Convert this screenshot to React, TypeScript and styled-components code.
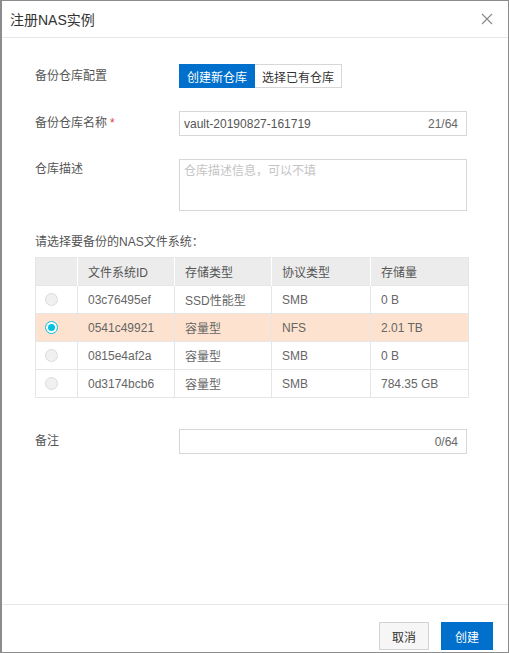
import React from 'react';
import styled, { createGlobalStyle } from 'styled-components';

const GlobalStyle = createGlobalStyle`
  html, body {
    margin: 0;
    padding: 0;
    background: #fff;
  }
  body {
    font-family: "Liberation Sans", "Noto Sans CJK SC", sans-serif;
    font-size: 12px;
    color: #555;
  }
`;

const Dialog = styled.div`
  box-sizing: border-box;
  width: 509px;
  height: 653px;
  display: flex;
  flex-direction: column;
  border: 1px solid #8c8c8c;
  border-left-width: 2px;
  background: #fff;
`;

const Header = styled.div`
  height: 36px;
  flex-shrink: 0;
  display: flex;
  align-items: center;
  justify-content: space-between;
  padding: 0 14px 0 8px;
  border-bottom: 1px solid #e7e7e7;
`;

const Title = styled.div`
  font-size: 14px;
  color: #333;
`;

const Close = styled.button`
  border: 0;
  background: none;
  padding: 0;
  width: 14px;
  height: 14px;
  display: flex;
  cursor: pointer;
`;

const Body = styled.div`
  flex: 1;
  padding: 26px 40px 0 33px;
`;

const Row = styled.div<{ $mb?: number; $mt?: number }>`
  display: flex;
  align-items: flex-start;
  margin-top: ${(p) => p.$mt ?? 0}px;
  margin-bottom: ${(p) => p.$mb ?? 23}px;
`;

const Label = styled.div<{ $lh: number }>`
  width: 144px;
  flex-shrink: 0;
  line-height: ${(p) => p.$lh}px;
  color: #555;
`;

const Star = styled.span`
  color: #e4393c;
  margin-left: 3px;
`;

const Segment = styled.div`
  display: flex;
`;

const SegButton = styled.button<{ $active?: boolean }>`
  height: 24px;
  padding: 0 7px;
  font: inherit;
  font-size: 12px;
  border: 1px solid ${(p) => (p.$active ? '#0070cc' : '#d7d7d7')};
  background: ${(p) => (p.$active ? '#0070cc' : '#fff')};
  color: ${(p) => (p.$active ? '#fff' : '#333')};
  cursor: pointer;
  & + & {
    border-left: 0;
  }
`;

const InputBox = styled.div`
  box-sizing: border-box;
  width: 288px;
  height: 25px;
  border: 1px solid #d7d7d7;
  display: flex;
  align-items: center;
  justify-content: space-between;
  padding: 0 8px 0 4px;
`;

const InputText = styled.span`
  color: #555;
`;

const Counter = styled.span`
  color: #666;
  margin-left: auto;
`;

const TextArea = styled.div`
  box-sizing: border-box;
  width: 288px;
  height: 52px;
  border: 1px solid #d7d7d7;
  padding: 2px 4px;
  color: #c4c4c4;
  line-height: 18px;
`;

const SectionTitle = styled.div`
  margin-top: 22px;
  line-height: 18px;
  color: #555;
`;

const Table = styled.table`
  margin-top: 6px;
  width: 434px;
  border-collapse: collapse;
  table-layout: fixed;
  border: 1px solid #e6e6e6;
`;

const Th = styled.th<{ $w?: number }>`
  box-sizing: border-box;
  width: ${(p) => (p.$w ? `${p.$w}px` : 'auto')};
  height: 28px;
  padding: 0 10px;
  background: #ececec;
  text-align: left;
  font-weight: normal;
  color: #555;
  border-left: 1px solid #fff;
  white-space: nowrap;
  &:first-child {
    border-left: 0;
  }
`;

const Tr = styled.tr<{ $selected?: boolean }>`
  background: ${(p) => (p.$selected ? '#fde3cf' : '#fff')};
`;

const Td = styled.td`
  box-sizing: border-box;
  height: 28px;
  padding: 0 10px;
  color: #666;
  border-top: 1px solid #e6e6e6;
  border-left: 1px solid #e6e6e6;
  white-space: nowrap;
  &:first-child {
    border-left: 0;
    padding: 0 0 0 9px;
  }
`;

const Radio = styled.span<{ $checked?: boolean }>`
  box-sizing: border-box;
  display: block;
  width: 13px;
  height: 13px;
  border-radius: 50%;
  border: 1px solid ${(p) => (p.$checked ? '#00c1de' : '#dcdcdc')};
  background: ${(p) => (p.$checked ? '#fff' : '#f0f0f0')};
  position: relative;
  &::after {
    content: '';
    display: ${(p) => (p.$checked ? 'block' : 'none')};
    position: absolute;
    left: 2px;
    top: 2px;
    width: 7px;
    height: 7px;
    border-radius: 50%;
    background: #00c1de;
  }
`;

const Footer = styled.div`
  height: 48px;
  flex-shrink: 0;
  border-top: 1px solid #e7e7e7;
  display: flex;
  align-items: flex-start;
  justify-content: flex-end;
  gap: 12px;
  padding: 17px 15px 0 0;
  box-sizing: border-box;
`;

const FootButton = styled.button<{ $primary?: boolean }>`
  height: 28px;
  padding: 0 ${(p) => (p.$primary ? 13 : 12)}px;
  font: inherit;
  font-size: 12px;
  border: 1px solid ${(p) => (p.$primary ? '#0070cc' : '#d2d2d2')};
  background: ${(p) => (p.$primary ? '#0070cc' : '#f6f6f6')};
  color: ${(p) => (p.$primary ? '#fff' : '#333')};
  cursor: pointer;
`;

const rows = [
  { id: '03c76495ef', type: 'SSD性能型', proto: 'SMB', size: '0 B' },
  { id: '0541c49921', type: '容量型', proto: 'NFS', size: '2.01 TB', selected: true },
  { id: '0815e4af2a', type: '容量型', proto: 'SMB', size: '0 B' },
  { id: '0d3174bcb6', type: '容量型', proto: 'SMB', size: '784.35 GB' },
];

const App = () => (
  <>
    <GlobalStyle />
    <Dialog>
      <Header>
        <Title>注册NAS实例</Title>
        <Close aria-label="close">
          <svg width="14" height="14" viewBox="0 0 14 14">
            <path d="M2 2 L12 12 M12 2 L2 12" stroke="#888" strokeWidth="1.1" />
          </svg>
        </Close>
      </Header>
      <Body>
        <Row>
          <Label $lh={24}>备份仓库配置</Label>
          <Segment>
            <SegButton $active>创建新仓库</SegButton>
            <SegButton>选择已有仓库</SegButton>
          </Segment>
        </Row>
        <Row>
          <Label $lh={25}>
            备份仓库名称<Star>*</Star>
          </Label>
          <InputBox>
            <InputText>vault-20190827-161719</InputText>
            <Counter>21/64</Counter>
          </InputBox>
        </Row>
        <Row $mb={0}>
          <Label $lh={20}>仓库描述</Label>
          <TextArea>仓库描述信息，可以不填</TextArea>
        </Row>
        <SectionTitle>请选择要备份的NAS文件系统：</SectionTitle>
        <Table>
          <thead>
            <tr>
              <Th $w={42} />
              <Th $w={97}>文件系统ID</Th>
              <Th $w={97}>存储类型</Th>
              <Th $w={99}>协议类型</Th>
              <Th>存储量</Th>
            </tr>
          </thead>
          <tbody>
            {rows.map((r) => (
              <Tr key={r.id} $selected={r.selected}>
                <Td>
                  <Radio $checked={r.selected} />
                </Td>
                <Td>{r.id}</Td>
                <Td>{r.type}</Td>
                <Td>{r.proto}</Td>
                <Td>{r.size}</Td>
              </Tr>
            ))}
          </tbody>
        </Table>
        <Row $mt={31}>
          <Label $lh={25}>备注</Label>
          <InputBox>
            <Counter>0/64</Counter>
          </InputBox>
        </Row>
      </Body>
      <Footer>
        <FootButton>取消</FootButton>
        <FootButton $primary>创建</FootButton>
      </Footer>
    </Dialog>
  </>
);

export default App;
